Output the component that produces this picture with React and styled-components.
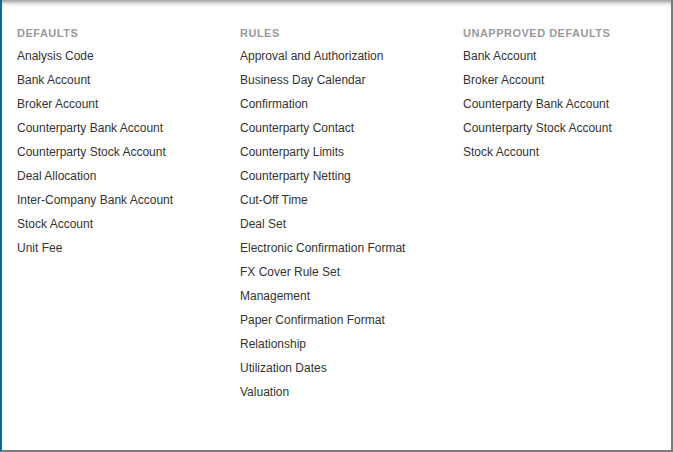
import React from "react";
import styled, { createGlobalStyle } from "styled-components";

const GlobalStyle = createGlobalStyle`
  html, body {
    margin: 0;
    padding: 0;
    background: #ffffff;
  }
  body {
    font-family: "Liberation Sans", Arial, sans-serif;
  }
`;

const columns = [
  {
    title: "Defaults",
    items: [
      "Analysis Code",
      "Bank Account",
      "Broker Account",
      "Counterparty Bank Account",
      "Counterparty Stock Account",
      "Deal Allocation",
      "Inter-Company Bank Account",
      "Stock Account",
      "Unit Fee",
    ],
  },
  {
    title: "Rules",
    items: [
      "Approval and Authorization",
      "Business Day Calendar",
      "Confirmation",
      "Counterparty Contact",
      "Counterparty Limits",
      "Counterparty Netting",
      "Cut-Off Time",
      "Deal Set",
      "Electronic Confirmation Format",
      "FX Cover Rule Set",
      "Management",
      "Paper Confirmation Format",
      "Relationship",
      "Utilization Dates",
      "Valuation",
    ],
  },
  {
    title: "Unapproved Defaults",
    items: [
      "Bank Account",
      "Broker Account",
      "Counterparty Bank Account",
      "Counterparty Stock Account",
      "Stock Account",
    ],
  },
];

function App() {
  return (
    <>
      <GlobalStyle />
      <Panel>
        <Columns>
          {columns.map((col) => (
            <Column key={col.title}>
              <Heading>{col.title}</Heading>
              <List>
                {col.items.map((item) => (
                  <Item key={item}>
                    <Link href="#">{item}</Link>
                  </Item>
                ))}
              </List>
            </Column>
          ))}
        </Columns>
      </Panel>
    </>
  );
}

const Panel = styled.div`
  width: 673px;
  height: 452px;
  box-sizing: border-box;
  background: #ffffff;
  border-left: 2px solid #0a6a9e;
  border-right: 2px solid #7a7a7a;
  border-bottom: 2px solid #7a7a7a;
  box-shadow: inset 0 6px 5px -4px rgba(0, 0, 0, 0.45);
  overflow: hidden;
`;

const Columns = styled.div`
  display: grid;
  grid-template-columns: 223px 223px 1fr;
  padding: 22px 0 0 15px;
`;

const Column = styled.div`
  display: flex;
  flex-direction: column;
`;

const Heading = styled.div`
  font-size: 11px;
  line-height: 22px;
  font-weight: bold;
  color: #9a9a9a;
  text-transform: uppercase;
  letter-spacing: 0.5px;
`;

const List = styled.ul`
  list-style: none;
  margin: 0;
  padding: 0;
`;

const Item = styled.li`
  font-size: 12px;
  line-height: 24px;
`;

const Link = styled.a`
  color: #333333;
  text-decoration: none;
  &:hover {
    text-decoration: underline;
  }
`;

export default App;
